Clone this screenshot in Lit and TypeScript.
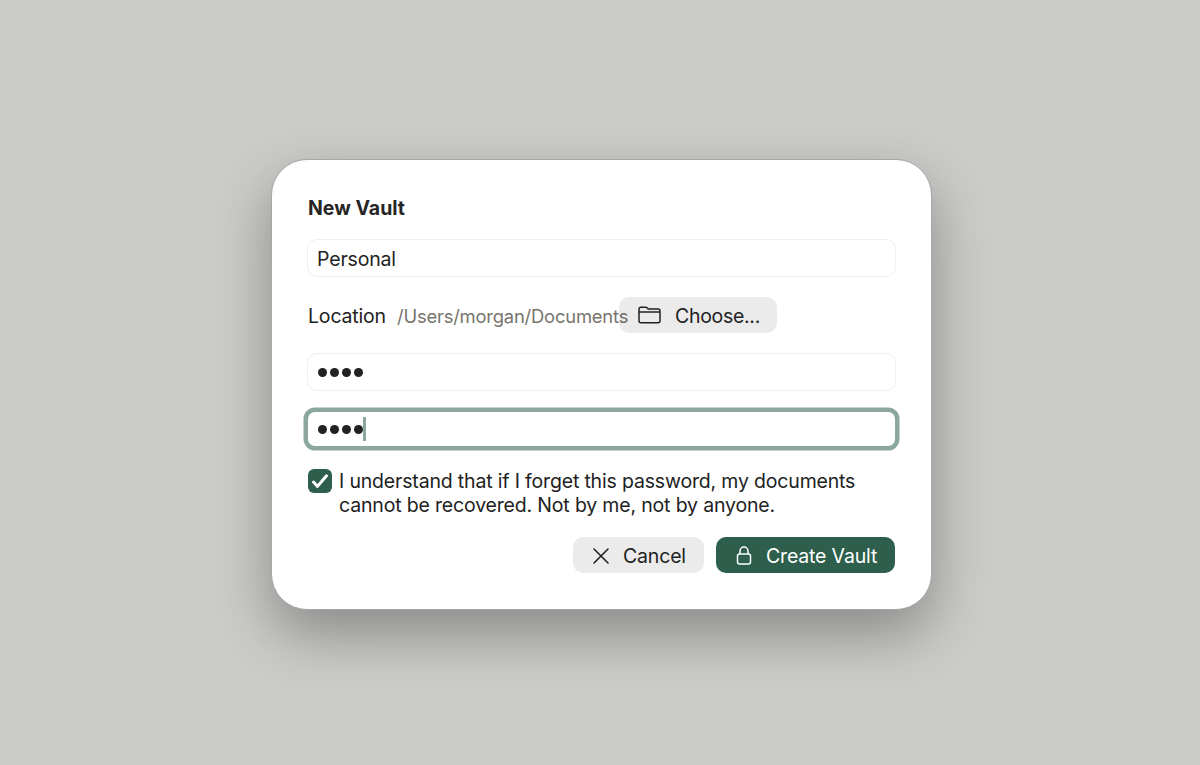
import { LitElement, html, css } from "lit";
import { customElement } from "lit/decorators.js";

@customElement("app-root")
export class AppRoot extends LitElement {
  static styles = css`
    :host { display: block; }
    .page {
      width: 1200px; height: 765px; background: #cbcbc9; display: flex;
      box-sizing: border-box; padding: 159px 0 0 271px; align-items: flex-start;
      font-family: Inter, "Liberation Sans", sans-serif; color: #222;
      font-size: 19.5px; letter-spacing: -0.17px;
    }
    .dialog {
      width: 661px; height: 451px; box-sizing: border-box; background: #fff;
      border: 1px solid #a6a6a4; border-radius: 36px; padding: 36px 35px 0 35px;
      box-shadow: 0 24px 56px rgba(0,0,0,.32);
      display: flex; flex-direction: column;
    }
    .title { font-size: 19.5px; font-weight: 700; line-height: 24px; margin: 0 0 19px 1px; color: #262626; letter-spacing: 0; }
    .field {
      height: 38px; box-sizing: border-box; border: 1px solid #efefee; border-radius: 10px;
      display: flex; align-items: center; padding: 1px 0 0 9px; background: #fff;
    }
    .loc { display: flex; align-items: center; height: 36px; margin: 20px 0 20px 1px; }
    .loclabel { flex: 0 0 89px; padding-top: 1px; }
    .path { flex: 0 0 222px; min-width: 0; white-space: nowrap; color: #77756e; font-size: 18.4px; letter-spacing: -0.2px; padding-top: 1px; }
    .btn {
      height: 36px; box-sizing: border-box; border-radius: 10px; background: rgba(0,0,0,.08);
      display: flex; align-items: center; color: #222;
    }
    .btn span { padding-top: 1px; }
    .choose { width: 158px; padding-left: 19px; gap: 14px; letter-spacing: -0.3px; }
    .dots { display: flex; gap: 3px; margin-left: 1px; }
    .dots i { width: 9px; height: 9px; border-radius: 50%; background: #222; display: block; }
    .focus { margin: 21px 1px 0 1px; height: 34px; border: 0; border-radius: 7px; box-shadow: 0 0 0 4.5px #8ca89d; padding: 0 0 0 9px; }
    .caret { width: 2.5px; height: 24px; background: #8ca89d; }
    .consent { display: flex; gap: 7px; margin: 23px 0 0 1px; line-height: 24px; }
    .box { flex: none; width: 24px; height: 24px; border-radius: 6px; background: #2d5f4c; display: flex; align-items: center; justify-content: center; }
    .actions { display: flex; justify-content: flex-end; gap: 12px; margin: 20px 0 0 0; }
    .cancel { width: 131px; padding-left: 18px; gap: 12px; }
    .create { width: 179px; padding-left: 19px; gap: 12px; background: #2d5f4c; color: #fff; margin-right: 1px; }
    svg { display: block; flex: none; overflow: visible; }
  `;

  render() {
    return html`<div class="page">
      <div class="dialog">
        <div class="title">New Vault</div>
        <div class="field">Personal</div>
        <div class="loc">
          <span class="loclabel">Location</span>
          <span class="path">/Users/morgan/Documents</span>
          <div class="btn choose">
            <svg width="23" height="18" viewBox="0 0 23 18" fill="none" stroke="#222" stroke-width="1.5" stroke-linejoin="round">
              <path d="M1 3.2C1 2 1.8 1.2 3 1.2h4.6c.7 0 1.2.3 1.7.8l.9 1h9.8c1.2 0 2 .8 2 2v9.8c0 1.2-.8 2-2 2H3c-1.2 0-2-.8-2-2V3.2z"/>
              <path d="M1 6h21"/>
            </svg>
            <span>Choose...</span>
          </div>
        </div>
        <div class="field"><div class="dots"><i></i><i></i><i></i><i></i></div></div>
        <div class="field focus"><div class="dots"><i></i><i></i><i></i><i></i></div><div class="caret"></div></div>
        <div class="consent">
          <div class="box">
            <svg width="18" height="18" viewBox="0 0 18 18" fill="none" stroke="#fff" stroke-width="3" stroke-linecap="round" stroke-linejoin="round"><path d="M2.5 10l4 4.4L15.5 3.8"/></svg>
          </div>
          <div>I understand that if I forget this password, my documents<br>cannot be recovered. Not by me, not by anyone.</div>
        </div>
        <div class="actions">
          <div class="btn cancel">
            <svg width="20" height="20" viewBox="0 0 20 20" fill="none" stroke="#222" stroke-width="1.6" stroke-linecap="round"><path d="M3 4l14 14M17 4L3 18"/></svg>
            <span>Cancel</span>
          </div>
          <div class="btn create">
            <svg width="19" height="20" viewBox="0 0 19 20" fill="none" stroke="#fff" stroke-width="1.5" stroke-linejoin="round"><rect x="2.5" y="9" width="13" height="10" rx="2"/><path d="M5 9V6a4 4 0 0 1 8 0v3"/></svg>
            <span>Create Vault</span>
          </div>
        </div>
      </div>
    </div>`;
  }
}
